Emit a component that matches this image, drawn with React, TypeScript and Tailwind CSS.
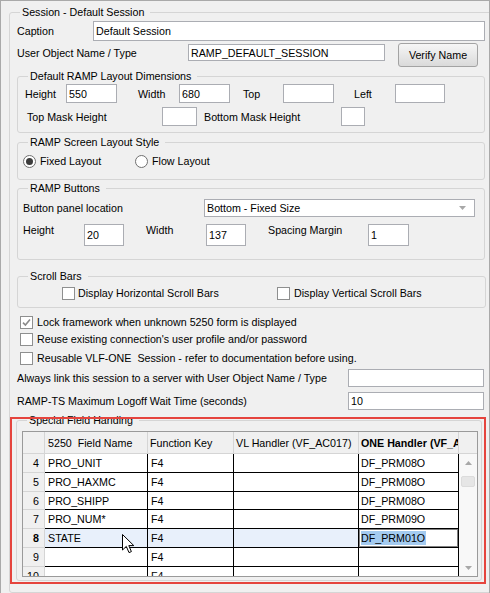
import React from "react";

function Field({ className = "", children }: { className?: string; children?: React.ReactNode }) {
  return (
    <div className={`shrink-0 bg-white border border-[#abadb3] pl-[2px] flex items-center whitespace-nowrap overflow-hidden ${className}`}>
      {children}
    </div>
  );
}

function Check({ checked }: { checked?: boolean }) {
  return (
    <span className="w-[13px] h-[13px] shrink-0 border border-[#8e8f8f] bg-white flex items-center justify-center">
      {checked && (
        <svg width="9" height="9" viewBox="0 0 9 9">
          <path d="M1 4.6 L3.4 7 L8 1.4" fill="none" stroke="#8a8a8a" strokeWidth="1.6" />
        </svg>
      )}
    </span>
  );
}

function Radio({ checked }: { checked?: boolean }) {
  return (
    <span className="w-[13px] h-[13px] shrink-0 rounded-full border border-[#707070] bg-white flex items-center justify-center">
      {checked && <span className="w-[7px] h-[7px] rounded-full bg-[#3c3c3c]" />}
    </span>
  );
}

function Arrow({ up }: { up?: boolean }) {
  return (
    <svg width="7" height="4" viewBox="0 0 7 4">
      <path d={up ? "M0 4 L3.5 0 L7 4 Z" : "M0 0 L7 0 L3.5 4 Z"} fill="#a8a8a8" />
    </svg>
  );
}

const rows: { n: string; name: string; fk: string; one: string; h: string; sel?: boolean }[] = [
  { n: "4", name: "PRO_UNIT", fk: "F4", one: "DF_PRM08O", h: "h-[19px]" },
  { n: "5", name: "PRO_HAXMC", fk: "F4", one: "DF_PRM08O", h: "h-[19px]" },
  { n: "6", name: "PRO_SHIPP", fk: "F4", one: "DF_PRM08O", h: "h-[18px]" },
  { n: "7", name: "PRO_NUM*", fk: "F4", one: "DF_PRM09O", h: "h-[19px]" },
  { n: "8", name: "STATE", fk: "F4", one: "DF_PRM01O", h: "h-[19px]", sel: true },
  { n: "9", name: "", fk: "F4", one: "", h: "h-[19px]" },
  { n: "10", name: "", fk: "F4", one: "", h: "h-[19px]" },
];

export default function App() {
  return (
    <div className="relative w-[490px] h-[593px] overflow-hidden bg-[#f0f0f0] border-l border-t border-r border-[#a9a9a9] pl-[8px] pt-[4px] font-['Liberation_Sans',Arial,sans-serif] text-[10.7px] leading-[14px] text-black">
      <fieldset className="w-[479px] h-[588px] border border-[#d5d5d5] rounded-[3px] px-[7px]">
        <legend className="ml-[3px] pl-[2px] pr-[6px] h-[14px] leading-[14px]">Session - Default Session</legend>

        {/* Caption */}
        <div className="mt-[2px] flex items-center h-[20px]">
          <span className="w-[76px] shrink-0">Caption</span>
          <Field className="w-[392px] h-[20px]">Default Session</Field>
        </div>

        {/* User object */}
        <div className="mt-[2px] flex items-start h-[24px]">
          <span className="w-[171px] shrink-0 mt-[3px]">User Object Name / Type</span>
          <Field className="mt-[1px] w-[197px] h-[17px]">RAMP_DEFAULT_SESSION</Field>
          <div className="ml-[13px] w-[80px] h-[24px] shrink-0 rounded-[3px] border border-[#a3a3a3] bg-linear-to-b from-[#f6f6f6] to-[#dadada] flex items-center justify-center">
            Verify Name
          </div>
        </div>

        {/* Default RAMP Layout Dimensions */}
        <fieldset className="mt-[2px] w-[468px] border border-[#d5d5d5] rounded-[3px] px-[5px] pb-[6px]">
          <legend className="ml-[5px] pl-[2px] pr-[6px] h-[14px] leading-[14px]">Default RAMP Layout Dimensions</legend>
          <div className="mt-[1px] flex items-center h-[19px] pl-[2px]">
            <span className="w-[41px] shrink-0">Height</span>
            <Field className="w-[51px] h-[19px]">550</Field>
            <span className="ml-[21px] w-[41px] shrink-0">Width</span>
            <Field className="w-[51px] h-[19px]">680</Field>
            <span className="ml-[13px] w-[40px] shrink-0">Top</span>
            <Field className="w-[51px] h-[19px]" />
            <span className="ml-[20px] w-[41px] shrink-0">Left</span>
            <Field className="w-[50px] h-[19px]" />
          </div>
          <div className="mt-[4px] flex items-center h-[19px] pl-[4px]">
            <span className="w-[135px] shrink-0">Top Mask Height</span>
            <Field className="w-[35px] h-[19px]" />
            <span className="ml-[7px] w-[137px] shrink-0">Bottom Mask Height</span>
            <Field className="w-[24px] h-[19px]" />
          </div>
        </fieldset>

        {/* RAMP Screen Layout Style */}
        <fieldset className="mt-[2px] w-[468px] border border-[#d5d5d5] rounded-[3px] px-[5px] pb-[11px]">
          <legend className="ml-[5px] pl-[2px] pr-[6px] h-[14px] leading-[14px]">RAMP Screen Layout Style</legend>
          <div className="mt-[5px] flex items-center h-[14px]">
            <Radio checked />
            <span className="ml-[4px] w-[95px] shrink-0">Fixed Layout</span>
            <Radio />
            <span className="ml-[4px]">Flow Layout</span>
          </div>
        </fieldset>

        {/* RAMP Buttons */}
        <fieldset className="mt-[1px] w-[468px] border border-[#d5d5d5] rounded-[3px] px-[5px] pb-[13px]">
          <legend className="ml-[5px] pl-[2px] pr-[6px] h-[14px] leading-[14px]">RAMP Buttons</legend>
          <div className="mt-[4px] flex items-center h-[18px]">
            <span className="w-[181px] shrink-0">Button panel location</span>
            <div className="w-[271px] h-[18px] shrink-0 bg-white border border-[#abadb3] pl-[2px] pr-[8px] flex items-center justify-between">
              <span>Bottom - Fixed Size</span>
              <Arrow />
            </div>
          </div>
          <div className="mt-[6px] flex items-start">
            <span className="w-[61px] shrink-0">Height</span>
            <Field className="mt-[1px] w-[40px] h-[22px]">20</Field>
            <span className="ml-[22px] w-[60px] shrink-0">Width</span>
            <Field className="mt-[1px] w-[40px] h-[22px]">137</Field>
            <span className="ml-[22px] w-[100px] shrink-0">Spacing Margin</span>
            <Field className="mt-[1px] w-[41px] h-[22px]">1</Field>
          </div>
        </fieldset>

        {/* Scroll Bars */}
        <fieldset className="mt-[9px] w-[469px] border border-[#d5d5d5] rounded-[3px] px-[5px] pb-[7px]">
          <legend className="ml-[5px] pl-[2px] pr-[6px] h-[14px] leading-[14px]">Scroll Bars</legend>
          <div className="mt-[3px] flex items-center h-[14px] pl-[39px]">
            <Check />
            <span className="ml-[3px] w-[199px] shrink-0">Display Horizontal Scroll Bars</span>
            <Check />
            <span className="ml-[4px]">Display Vertical Scroll Bars</span>
          </div>
        </fieldset>

        {/* checkboxes */}
        <div className="mt-[7px] flex items-center h-[14px] pl-[3px]">
          <Check checked />
          <span className="ml-[4px]">Lock framework when unknown 5250 form is displayed</span>
        </div>
        <div className="mt-[3px] flex items-center h-[14px] pl-[3px]">
          <Check />
          <span className="ml-[4px]">Reuse existing connection's user profile and/or password</span>
        </div>
        <div className="mt-[5px] flex items-center h-[14px] pl-[3px]">
          <Check />
          <span className="ml-[4px] whitespace-pre">Reusable VLF-ONE  Session - refer to documentation before using.</span>
        </div>

        <div className="mt-[4px] flex items-center h-[18px]">
          <span className="w-[331px] shrink-0">Always link this session to a server with User Object Name / Type</span>
          <Field className="w-[136px] h-[18px]" />
        </div>
        <div className="mt-[5px] flex items-center h-[18px]">
          <span className="w-[331px] shrink-0">RAMP-TS Maximum Logoff Wait Time (seconds)</span>
          <Field className="w-[136px] h-[18px]">10</Field>
        </div>

        {/* Special Field Handing */}
        <fieldset className="mt-[3px] -ml-[1px] w-[466px] border border-[#d5d5d5] rounded-[3px] pl-[5px] pr-[3px] pb-[3px]">
          <legend className="ml-[5px] pl-[2px] pr-[6px] h-[14px] leading-[14px]">Special Field Handing</legend>
          <div className="mt-[4px] w-[456px] h-[146px] border border-[#9a9a9a] overflow-hidden bg-white flex flex-col">
            {/* header */}
            <div className="flex h-[22px] shrink-0 bg-[#f0f0f0] border-b border-[#d5d5d5]">
              <div className="w-[22px] shrink-0 border-r border-[#d5d5d5]" />
              <div className="w-[103px] shrink-0 border-r border-[#d5d5d5] pl-[3px] flex items-center whitespace-pre">5250  Field Name</div>
              <div className="w-[86px] shrink-0 border-r border-[#d5d5d5] pl-[2px] flex items-center whitespace-nowrap">Function Key</div>
              <div className="w-[125px] shrink-0 border-r border-[#d5d5d5] pl-[2px] flex items-center whitespace-nowrap overflow-hidden">VL Handler (VF_AC017)</div>
              <div className="w-[100px] shrink-0 border-r border-[#d5d5d5] pl-[2px] flex items-center whitespace-nowrap overflow-hidden font-bold">ONE Handler (VF_AC017)</div>
              <div className="w-[18px] shrink-0" />
            </div>
            {/* body */}
            <div className="flex flex-1 min-h-0">
              <div className="w-[436px] shrink-0 flex flex-col">
                {rows.map((r) => (
                  <div key={r.n} className={`flex shrink-0 ${r.h}`}>
                    <div className={`w-[22px] shrink-0 bg-[#f0f0f0] border-r border-b border-[#d5d5d5] pr-[5px] flex items-center justify-end ${r.sel ? "font-bold" : ""}`}>
                      {r.n}
                    </div>
                    <div className={`w-[103px] shrink-0 border-r border-b border-black pl-[3px] flex items-center whitespace-nowrap ${r.sel ? "bg-[#e8f0fb]" : ""}`}>
                      {r.name}
                    </div>
                    <div className={`w-[86px] shrink-0 border-r border-b border-black pl-[3px] flex items-center ${r.sel ? "bg-[#e8f0fb]" : ""}`}>
                      {r.fk}
                    </div>
                    <div className={`w-[125px] shrink-0 border-r border-b border-black ${r.sel ? "bg-[#e8f0fb]" : ""}`} />
                    <div className="w-[100px] shrink-0 border-r border-b border-black flex items-center">
                      {r.sel ? (
                        <div className="w-full h-full border border-[#7f7f7f] pl-[1px] flex items-center">
                          <span className="bg-[#a4cbf0] pr-[1px]">{r.one}</span>
                        </div>
                      ) : (
                        <span className="pl-[2px]">{r.one}</span>
                      )}
                    </div>
                  </div>
                ))}
              </div>
              {/* scrollbar */}
              <div className="w-[18px] shrink-0 bg-[#f8f8f8] flex flex-col items-center justify-between">
                <div className="flex flex-col items-center w-full">
                  <div className="h-[17px] w-full flex items-center justify-center">
                    <Arrow up />
                  </div>
                  <div className="mt-[5px] w-[14px] h-[11px] rounded-[2px] bg-[#e6e6e6] border border-[#dcdcdc]" />
                </div>
                <div className="h-[17px] w-full flex items-center justify-center">
                  <Arrow />
                </div>
              </div>
            </div>
          </div>
        </fieldset>
      </fieldset>

      {/* red annotation box */}
      <div className="pointer-events-none absolute left-[9px] top-[416px] w-[476px] h-[167px] border-2 border-[#e5443d]" />

      {/* mouse cursor */}
      <svg className="pointer-events-none absolute left-[121px] top-[533px]" width="13" height="20" viewBox="0 0 13 20">
        <path d="M0.5 0.5 L0.5 16 L4.3 12.4 L7 18.6 L9.4 17.6 L6.8 11.6 L11.8 11.6 Z" fill="white" stroke="black" strokeWidth="1" strokeLinejoin="round" />
      </svg>
    </div>
  );
}
